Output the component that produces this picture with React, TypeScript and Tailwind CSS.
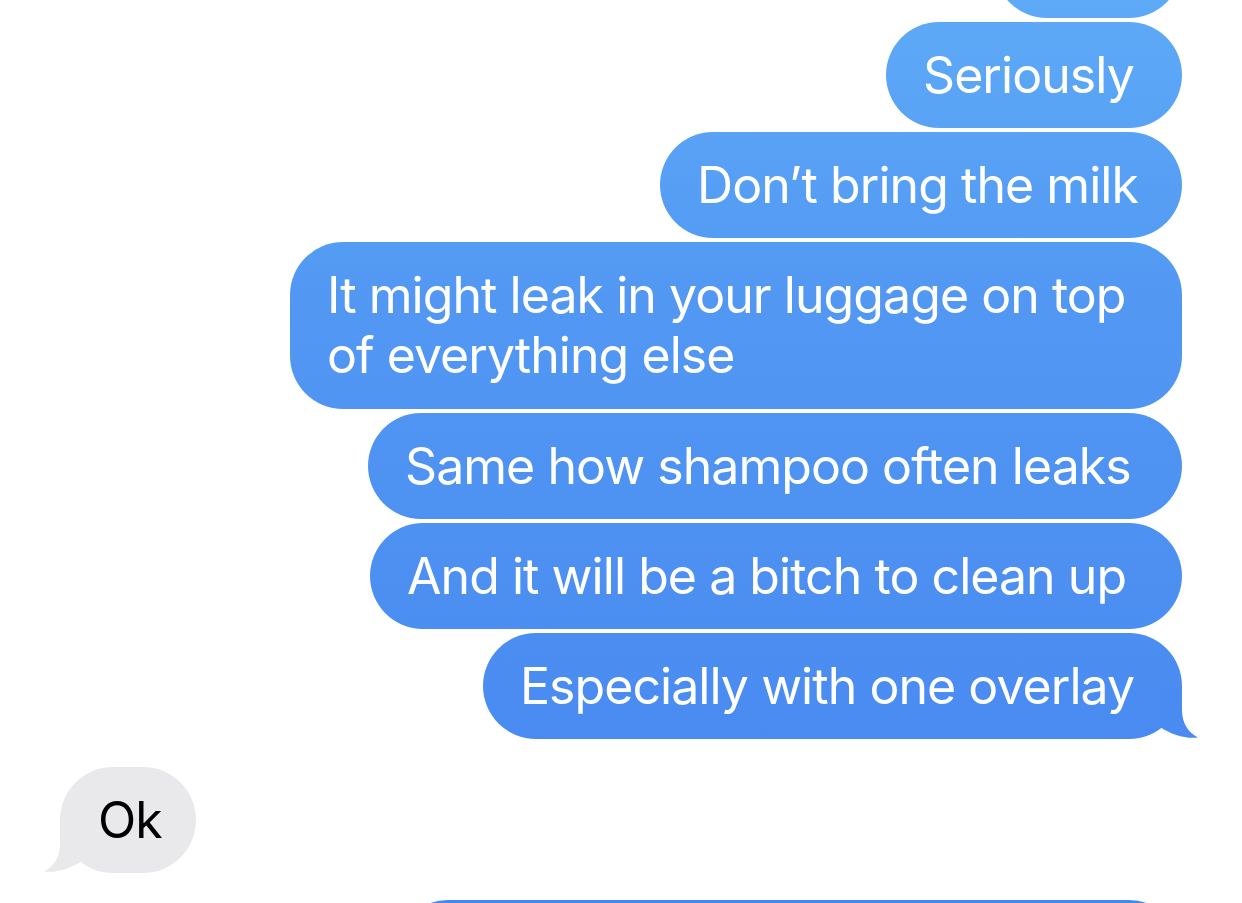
import React from "react";

const blueBg =
  "bg-fixed bg-[linear-gradient(180deg,#5eaaf7_0px,#5298f3_300px,#4a8cf1_700px,#4586ef_903px)]";

function Blue({
  w,
  children,
  tail,
  extra = "",
}: {
  w: string;
  children: React.ReactNode;
  tail?: boolean;
  extra?: string;
}) {
  return (
    <div className={`relative ${w}`}>
      <div
        className={`${blueBg} rounded-[53px] pl-[37px] pr-[20px] py-[23px] text-white ${extra}`}
      >
        {children}
      </div>
      {tail && (
        <svg
          className="absolute right-[-18px] bottom-0"
          width="60"
          height="52"
          viewBox="0 0 60 52"
        >
          <path
            d="M42 0 L42 23 C42 37 49 46 58 50.5 C46 52 32 48 20 40 L20 0 Z"
            fill="#4a8bf1"
          />
        </svg>
      )}
    </div>
  );
}

export default function App() {
  return (
    <div
      className="h-[903px] w-[1242px] overflow-hidden bg-white"
      style={{ fontFamily: 'Inter, "Noto Sans", sans-serif' }}
    >
      <div className="flex flex-col text-[50px] leading-[60px] tracking-[-0.019em]">
        <div className="flex flex-col items-end gap-[4px] pr-[60px] mt-[-88px]">
          <Blue w="w-[188px]">&nbsp;</Blue>
          <Blue w="w-[296px]">Seriously</Blue>
          <Blue w="w-[522px]">Don’t bring the milk</Blue>
          <Blue w="w-[892px]" extra="pb-[24px]">
            It might leak in your luggage on top
            <br />
            of everything else
          </Blue>
          <Blue w="w-[814px]">Same how shampoo often leaks</Blue>
          <Blue w="w-[812px]">And it will be a bitch to clean up</Blue>
          <Blue w="w-[699px]" tail>
            Especially with one overlay
          </Blue>
        </div>
        <div className="flex pl-[60px] mt-[28px]">
          <div className="relative w-[136px]">
            <div className="rounded-[53px] bg-[#e9e9eb] pl-[38px] py-[23px] text-black">
              Ok
            </div>
            <svg
              className="absolute left-[-18px] bottom-0"
              width="60"
              height="52"
              viewBox="0 0 60 52"
            >
              <path
                d="M18 0 L18 23 C18 37 11 46 2 50.5 C14 52 28 48 40 40 L40 0 Z"
                fill="#e9e9eb"
              />
            </svg>
          </div>
        </div>
        <div className="flex justify-end pr-[60px] mt-[27px]">
          <Blue w="w-[787px]">&nbsp;</Blue>
        </div>
      </div>
    </div>
  );
}
